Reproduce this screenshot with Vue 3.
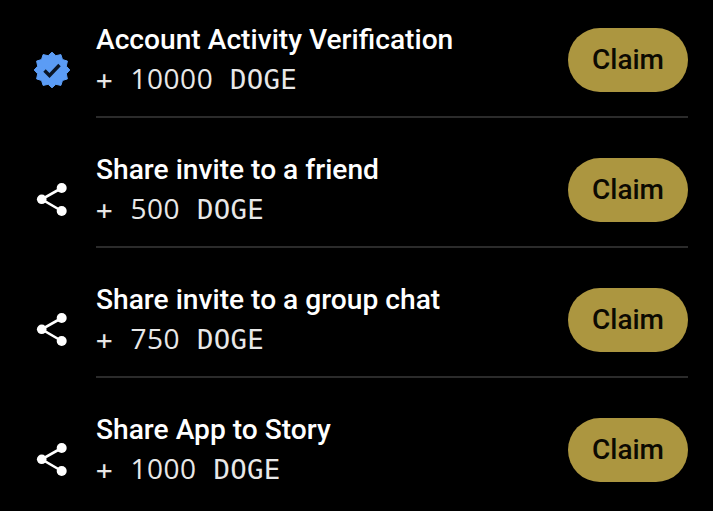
<template>
  <div class="tasks">
    <div v-for="task in tasks" :key="task.title" class="task">
      <div class="task-icon">
        <svg v-if="task.icon === 'verified'" width="40" height="40" viewBox="0 0 40 40">
          <polygon :points="badge" fill="#5b9cf5" stroke="#5b9cf5" stroke-width="1" stroke-linejoin="round" />
          <path d="M12.5 20.5l5 5 10-10.5" fill="none" stroke="#0a1526" stroke-width="3.4" />
        </svg>
        <svg v-else width="36" height="36" viewBox="0 0 36 36">
          <path d="M29.7 6L9.7 17.3 29.7 29" fill="none" stroke="#fff" stroke-width="2.6" />
          <circle cx="29.7" cy="6" r="5" fill="#fff" />
          <circle cx="9.7" cy="17.3" r="4.8" fill="#fff" />
          <circle cx="29.7" cy="29" r="5" fill="#fff" />
        </svg>
      </div>
      <div class="task-body">
        <div class="task-text">
          <div class="task-title">{{ task.title }}</div>
          <div class="task-reward">+ <span class="amount">{{ task.amount }}</span> DOGE</div>
        </div>
        <button class="claim">Claim</button>
      </div>
    </div>
  </div>
</template>

<script setup>
const tasks = [
  { title: 'Account Activity Verification', amount: 10000, icon: 'verified' },
  { title: 'Share invite to a friend', amount: 500, icon: 'share' },
  { title: 'Share invite to a group chat', amount: 750, icon: 'share' },
  { title: 'Share App to Story', amount: 1000, icon: 'share' }
]

// twelve-pointed seal for the verified icon
const badge = Array.from({ length: 24 }, (_, i) => {
  const r = i % 2 ? 14.8 : 17.8
  const a = (i * Math.PI) / 12 - Math.PI / 2
  return `${(20 + r * Math.cos(a)).toFixed(2)},${(20 + r * Math.sin(a)).toFixed(2)}`
}).join(' ')
</script>

<style>
html,
body {
  background: #000;
  overflow: hidden;
}
</style>

<style scoped>
.tasks {
  width: 713px;
  height: 511px;
  margin-top: -12px;
  background: #000;
  color: #fff;
  font-family: Roboto, "Liberation Sans", sans-serif;
}

.task {
  display: flex;
  padding: 0 25px 0 32px;
}

.task-icon {
  width: 64px;
  flex: none;
  display: flex;
  align-items: center;
  padding-top: 34px;
  box-sizing: border-box;
  height: 130px;
}

.task-body {
  flex: 1;
  height: 130px;
  box-sizing: border-box;
  display: flex;
  align-items: center;
  justify-content: space-between;
  padding-top: 15px;
  border-bottom: 2px solid #2b2b2b;
}

.task-text {
  padding-top: 1px;
}

.task-title {
  font-size: 28.16px;
  font-weight: 500;
  line-height: 40px;
}

.task-reward {
  font-family: "DejaVu Sans Mono", monospace;
  font-size: 27.4px;
  letter-spacing: 0.3px;
  line-height: 40px;
  color: #e8e8e8;
}

/* digits without the dotted zero */
.amount {
  font-family: "Open Sans", sans-serif;
  font-size: 28px;
  letter-spacing: 0.5px;
  line-height: 0;
  margin-left: 1px;
}

.claim {
  width: 120px;
  height: 64px;
  border: 0;
  border-radius: 32px;
  background: #ac9640;
  color: #0c0a02;
  font-family: Roboto, "Liberation Sans", sans-serif;
  font-size: 28px;
  font-weight: 500;
  padding: 0;
}
</style>
